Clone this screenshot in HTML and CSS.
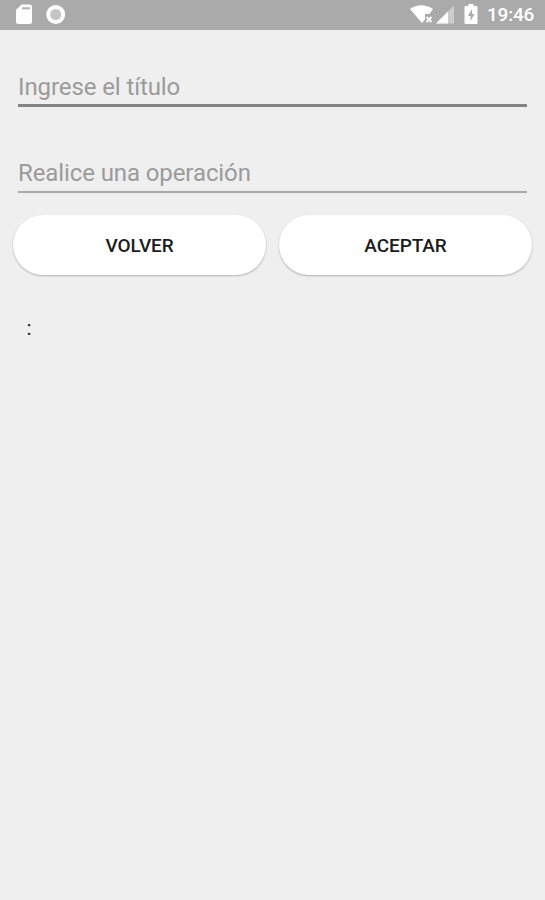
FILE: index.html
```html
<!DOCTYPE html>
<html lang="es">
<head>
<meta charset="utf-8">
<title>Operación</title>
<link rel="stylesheet" href="styles.css">
</head>
<body>
<header class="status">
  <svg class="left-icons" width="60" height="30" viewBox="0 0 60 30" fill="#fff">
    <path d="M6.500 4.500h8.500a2 2 0 0 1 2 2v15.500a2 2 0 0 1-2 2H3a2 2 0 0 1-2-2V10z"/>
    <path d="M7 8.300h8" stroke="#b4b4b4" stroke-width="2.200"/>
    <circle cx="40.700" cy="14.500" r="7.500" fill="#c4c4c4" stroke="#fff" stroke-width="4"/>
  </svg>
  <div class="right">
    <svg width="70" height="30" viewBox="410 0 70 30" fill="#fff">
      <path d="M410 9Q421 1.500 433 9L429.500 14H425V19.500L422 23Z"/>
      <path d="M426.500 17l5 5m0-5l-5 5" stroke="#fff" stroke-width="1.800"/>
      <path d="M454 5.500v18H436z" opacity=".4"/>
      <path d="M448 11.500v12h-12z"/>
      <path d="M468.500 4h5v2h3a1 1 0 0 1 1 1v16a1 1 0 0 1-1 1h-11a1 1 0 0 1-1-1V7a1 1 0 0 1 1-1h3z"/>
      <path d="M472 9l-4 7h2.500v5l4-7H472z" fill="#aaa"/>
    </svg>
    <span class="clock">19:46</span>
  </div>
</header>
<main class="form">
  <input class="field" type="text" placeholder="Ingrese el título">
  <input class="field" type="text" placeholder="Realice una operación">
  <div class="actions">
    <button class="btn">VOLVER</button>
    <button class="btn">ACEPTAR</button>
  </div>
  <p class="result">:</p>
</main>
</body>
</html>
```

FILE: styles.css
```css
* { box-sizing: border-box; }
body { margin: 0; min-height: 900px; background: #efefef; font-family: Roboto, sans-serif; }
.status { height: 30px; background: #aaa; display: flex; justify-content: space-between; padding: 0 11px 0 15px; }
.right { display: flex; align-items: center; color: #fff; }
.clock { width: 47px; margin-left: 7px; font-size: 19px; font-weight: 500; line-height: 30px; letter-spacing: -.2px; white-space: nowrap; }
.form { padding: 38px 13px 0; }
.field { display: block; width: 509px; height: 39px; margin: 0 5px 47px; padding: 2px 0 0; border: 0; border-bottom: 3px solid #838383; border-radius: 0; background: transparent; outline: 0; font: 24px Roboto, sans-serif; letter-spacing: -.1px; color: #222; }
.field::placeholder { color: #9b9b9b; opacity: 1; }
.field + .field { padding-top: 1px; border-bottom: 2px solid #a8a8a8; margin-bottom: 22px; }
.actions { display: flex; gap: 13px; }
.btn { flex: 1; height: 60px; padding: 0; border: 0; border-radius: 30px; background: #fff; box-shadow: 0 1px 2px rgba(0,0,0,.27); font: 500 19px Roboto, sans-serif; letter-spacing: -.1px; color: #1c1c1c; }
.result { margin: 41px 13.5px 0; font-size: 21px; line-height: 25px; color: #222; }
```
